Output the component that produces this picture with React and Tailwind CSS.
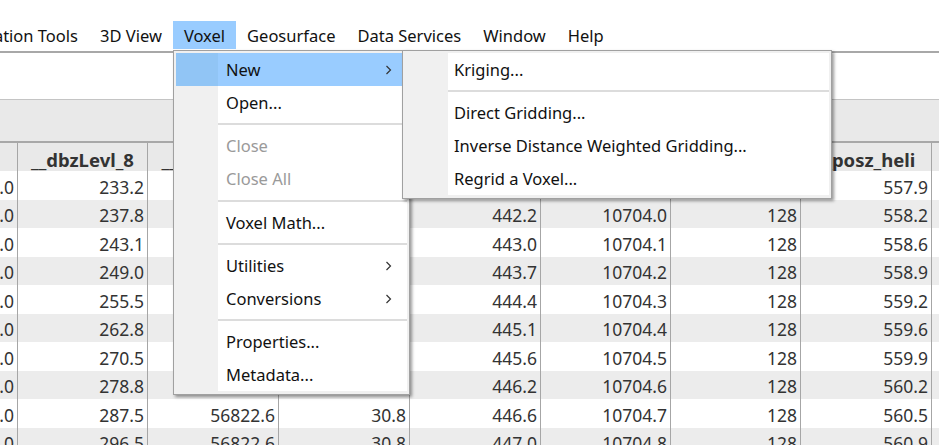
import { useState } from "react";

const menuBar = ["3D View", "Voxel", "Geosurface", "Data Services", "Window", "Help"];

const voxelMenu = [
  { label: "New", sub: true, active: true },
  { label: "Open..." },
  { sep: true },
  { label: "Close", disabled: true },
  { label: "Close All", disabled: true },
  { sep: true, tall: true },
  { label: "Voxel Math..." },
  { sep: true },
  { label: "Utilities", sub: true },
  { label: "Conversions", sub: true },
  { sep: true },
  { label: "Properties..." },
  { label: "Metadata..." },
];

const newMenu = [
  { label: "Kriging..." },
  { sep: true },
  { label: "Direct Gridding..." },
  { label: "Inverse Distance Weighted Gridding..." },
  { label: "Regrid a Voxel..." },
];

const columns = [
  { name: "", w: "w-[18px]" },
  { name: "__dbzLevl_8", w: "w-[130px]" },
  { name: "__dbzLevl_9", w: "w-[131px]" },
  { name: "__dbzLevl_10", w: "w-[131px]" },
  { name: "__dist_km", w: "w-[131px]" },
  { name: "__dist_m", w: "w-[130px]" },
  { name: "__nlev", w: "w-[130px]" },
  { name: "__posz_heli", w: "w-[131px]" },
];

const lvl8 = ["233.2", "237.8", "243.1", "249.0", "255.5", "262.8", "270.5", "278.8", "287.5", "296.5"];
const dist = ["441.4", "442.2", "443.0", "443.7", "444.4", "445.1", "445.6", "446.2", "446.6", "447.0"];
const distM = ["10703.9", "10704.0", "10704.1", "10704.2", "10704.3", "10704.4", "10704.5", "10704.6", "10704.7", "10704.8"];
const heli = ["557.9", "558.2", "558.6", "558.9", "559.2", "559.6", "559.9", "560.2", "560.5", "560.9"];

const rows = lvl8.map((v, i) => ["1.0", v, "56822.6", "30.8", dist[i], distM[i], "128", heli[i]]);

const Chevron = () => (
  <svg width="7" height="10" viewBox="0 0 7 10" className="ml-auto mr-[15px]">
    <path d="M1.5 1 L5.5 5 L1.5 9" fill="none" stroke="#333" strokeWidth="1.2" />
  </svg>
);

const Menu = ({ items, gutter, textPad, className }) => (
  <div
    className={`absolute top-[50px] border border-[#a0a0a0] bg-[#f0f0f0] px-[2px] pt-[2px] pb-[3px] shadow-[2px_2px_3px_rgba(0,0,0,0.4)] ${className}`}
  >
    {items.map((item, i) =>
      item.sep ? (
        <div key={i} className={`flex ${item.tall ? "h-[11px]" : "h-[10px]"}`}>
          <div className={gutter} />
          <div className="flex flex-1 items-center bg-white">
            <div className="h-[2px] w-full bg-[#dcdcdc]" />
          </div>
        </div>
      ) : (
        <div
          key={i}
          className={`flex h-[33px] items-center ${item.active ? "bg-[#99ccff]" : "bg-white"}`}
        >
          <div className={`${gutter} h-full ${item.active ? "bg-[#91c5f5]" : "bg-[#f0f0f0]"}`} />
          <span className={`${textPad} pt-[2px] ${item.disabled ? "text-[#9a9a9a]" : "text-[#111]"}`}>
            {item.label}
          </span>
          {item.sub && <Chevron />}
        </div>
      )
    )}
  </div>
);

const App = () => {
  const [open] = useState(true);

  return (
    <div className="relative h-[445px] w-[939px] overflow-hidden bg-white font-['Noto_Sans',sans-serif] text-[16.5px] text-[#111]">
      <div className="flex h-[51px] items-start pt-[21px]">
        <div className="flex h-[28px] w-[89px] items-center justify-end overflow-hidden whitespace-nowrap pt-[2px] pr-[11px]">
          Interpretation Tools
        </div>
        {menuBar.map((m) => (
          <div
            key={m}
            className={`flex h-[28px] items-center px-[11px] pt-[2px] ${m === "Voxel" && open ? "bg-[#99ccff]" : ""}`}
          >
            {m}
          </div>
        ))}
      </div>

      <div className="h-[3px] border-t-2 border-[#a8a8a8]" />
      <div className="h-[46px] border-b border-[#c4c4c4] bg-white" />
      <div className="h-[43px] border-b-2 border-[#a8a8a8] bg-[#e9e9e9]" />

      <div className="text-[17.5px] text-[#333]">
        <div className="flex h-[28px] bg-[#e9e9e9] text-[18.5px] font-bold">
          {columns.map((c) => (
            <div
              key={c.name}
              className={`${c.w} flex shrink-0 items-center justify-center overflow-hidden whitespace-nowrap border-r border-[#a6a6a6] pt-[5px]`}
            >
              {c.name}
            </div>
          ))}
          <div className="flex-1" />
        </div>
        {rows.map((r, i) => (
          <div key={i} className={`flex h-[28.5px] ${i % 2 ? "bg-[#ececec]" : "bg-white"}`}>
            {r.map((v, j) => (
              <div
                key={j}
                className={`${columns[j].w} flex shrink-0 items-center justify-end overflow-hidden whitespace-nowrap border-r border-[#a6a6a6] pt-[3px] pr-[3px]`}
              >
                {v}
              </div>
            ))}
            <div className="flex-1" />
          </div>
        ))}
      </div>

      {open && (
        <>
          <Menu items={voxelMenu} gutter="w-[42px] shrink-0" textPad="pl-[8px]" className="left-[173px] w-[237px]" />
          <Menu items={newMenu} gutter="w-[43px] shrink-0" textPad="pl-[6px]" className="left-[402px] w-[430px]" />
        </>
      )}
    </div>
  );
};

export default App;
